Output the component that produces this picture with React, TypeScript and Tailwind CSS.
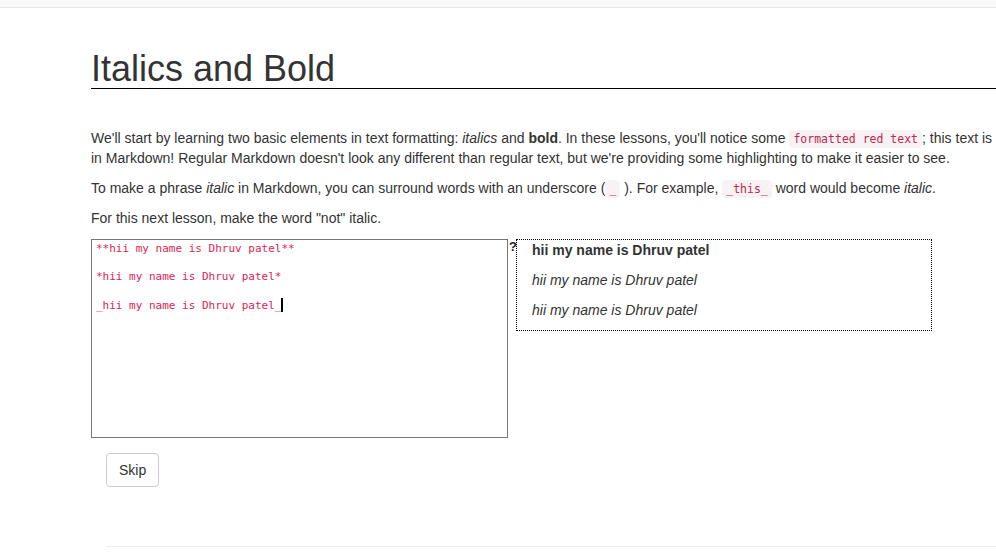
const Code = ({ children }: { children: string }) => (
  <code className="px-[4px] py-[2px] rounded-[4px] bg-[#f9f2f4] text-[#c7254e] text-[11.5px] leading-[14px] font-['DejaVu_Sans_Mono',monospace]">
    {children}
  </code>
);

const App = () => {
  const name = 'hii my name is Dhruv patel';

  return (
    <div className="min-h-[560px] bg-white text-[#333] text-[14px] leading-[20px] font-['Liberation_Sans',Arial,sans-serif] overflow-hidden">
      <div className="h-[8px] bg-[#f8f8f8] border-b border-[#e7e7e7]" />

      <div className="ml-[91px] w-[905px]">
        <h1 className="mt-[41px] text-[36px] leading-[39px] font-normal border-b border-black">
          Italics and Bold
        </h1>

        <p className="mt-[39px] mb-[10px]">
          We'll start by learning two basic elements in text formatting: <em>italics</em> and <strong>bold</strong>. In
          these lessons, you'll notice some <Code>formatted red text</Code>; this text is in Markdown! Regular
          Markdown doesn't look any different than regular text, but we're providing some highlighting to make it easier
          to see.
        </p>
        <p className="mb-[10px]">
          To make a phrase <em>italic</em> in Markdown, you can surround words with an underscore (<Code>_</Code> ). For
          example, <Code>_this_</Code> word would become <em>italic</em>.
        </p>
        <p>For this next lesson, make the word "not" italic.</p>

        <div className="mt-[11px] flex items-start">
          <div className="w-[417px] h-[199px] border border-[#767676] px-[4px] pt-[2px] whitespace-pre text-[11px] leading-[14px] text-[#dc1e55] font-['DejaVu_Sans_Mono',monospace]">
            {`**${name}**\n\n*${name}*\n\n_${name}_`}
            <span className="inline-block w-[2px] h-[14px] bg-black align-[-3px]" />
          </div>
          <div className="w-[8px] pl-[1px] pt-[1px] text-[13px] leading-[14px] font-bold text-[#222]">?</div>
          <div className="w-[416px] border border-dotted border-black px-[15px]">
            <p className="mb-[10px] font-bold">{name}</p>
            <p className="mb-[10px] italic">{name}</p>
            <p className="mb-[10px] italic">{name}</p>
          </div>
        </div>

        <button className="mt-[15px] ml-[15px] px-[12px] py-[6px] border border-[#ccc] rounded-[4px] bg-white text-[14px] leading-[20px] text-[#333]">
          Skip
        </button>

        <hr className="mt-[59px] ml-[15px] border-t border-[#eee]" />
      </div>
    </div>
  );
};

export default App;
